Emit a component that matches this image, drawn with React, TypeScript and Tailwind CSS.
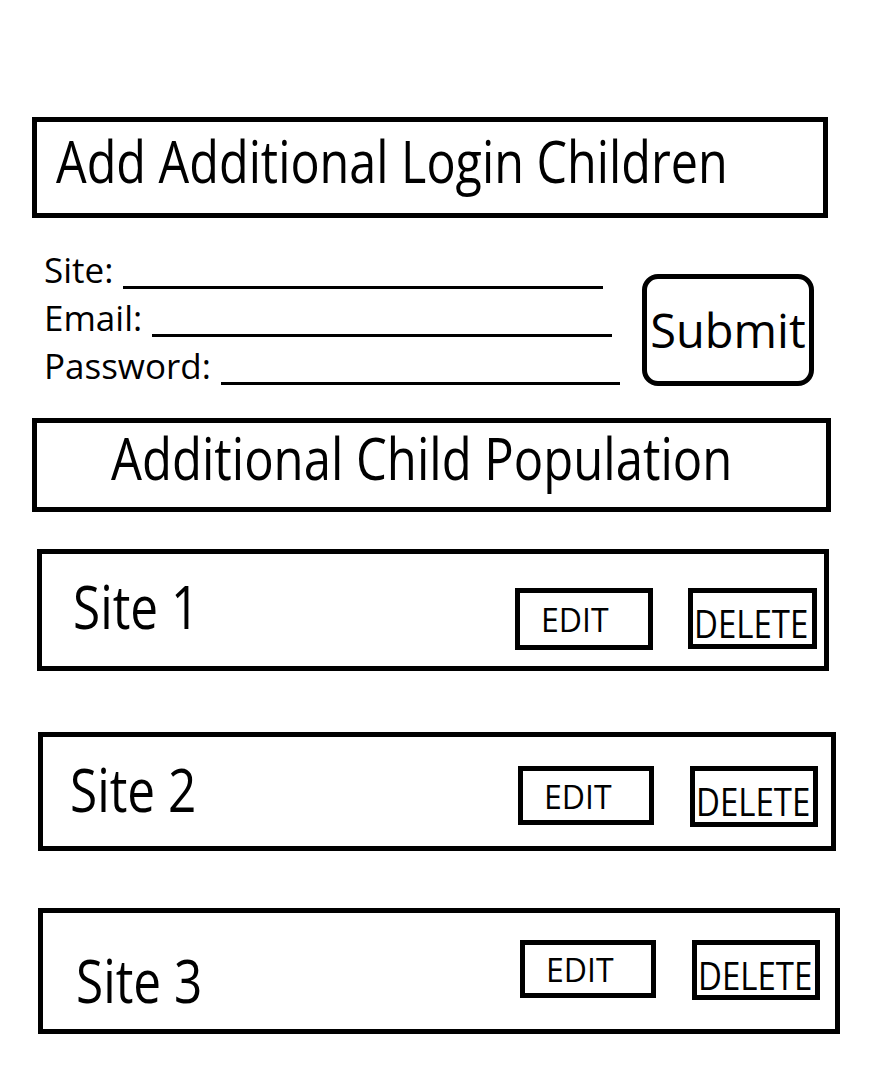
import React from 'react';

const fields = [
  { label: 'Site:', row: 'w-[559px]' },
  { label: 'Email:', row: 'w-[568px]' },
  { label: 'Password:', row: 'w-[576px]' },
];

const sites = [
  {
    name: 'Site 1',
    box: 'ml-[37px] mt-[37px] w-[792px] h-[122px]',
    label: 'ml-[31px] mt-[28px]',
    actions: 'mr-[7px] mt-[34px] gap-[35px]',
    edit: 'w-[138px] h-[62px]',
    del: 'w-[129px] h-[61px]',
  },
  {
    name: 'Site 2',
    box: 'ml-[38px] mt-[61px] w-[798px] h-[119px]',
    label: 'ml-[27px] mt-[28px]',
    actions: 'mr-[13px] mt-[29px] gap-[36px]',
    edit: 'w-[136px] h-[59px]',
    del: 'w-[128px] h-[61px]',
  },
  {
    name: 'Site 3',
    box: 'ml-[38px] mt-[57px] w-[802px] h-[126px]',
    label: 'ml-[33px] mt-[43px]',
    actions: 'mr-[15px] mt-[27px] gap-[36px]',
    edit: 'w-[136px] h-[58px]',
    del: 'w-[128px] h-[60px]',
  },
];

const SiteRow: React.FC<{ site: (typeof sites)[number] }> = ({ site }) => (
  <div className={`flex items-start border-[5px] border-black ${site.box}`}>
    <span className={`block whitespace-nowrap text-[49.5px] leading-none scale-y-[1.2] ${site.label}`}>
      {site.name}
    </span>
    <div className={`ml-auto flex items-start ${site.actions}`}>
      <button className={`flex items-center justify-start border-[5px] border-black pl-[21px] ${site.edit}`}>
        <span className="block text-[32px] leading-none scale-y-[1.05]">EDIT</span>
      </button>
      <button className={`flex items-center justify-start border-[5px] border-black pl-[1px] pt-[10px] ${site.del}`}>
        <span className="block text-[33px] leading-none scale-y-[1.18]">DELETE</span>
      </button>
    </div>
  </div>
);

export default function App() {
  return (
    <div className="min-h-screen bg-white pt-[117px] pb-[38px] font-['Open_Sans',sans-serif] text-black">
      <div className="ml-[32px] h-[101px] w-[796px] border-[5px] border-black pl-[19px] pt-[14px]">
        <h1 className="block whitespace-nowrap text-[48.5px] leading-none scale-y-[1.2]">
          Add Additional Login Children
        </h1>
      </div>

      <div className="ml-[44px] mt-[25px] flex items-start">
        <div className="flex w-[576px] flex-col">
          {fields.map((f) => (
            <div key={f.label} className={`flex h-[48px] items-start ${f.row}`}>
              <span className="mt-[9px] inline-block whitespace-nowrap text-[35px] leading-none">
                {f.label}
              </span>
              <span className="ml-[10px] mt-[43px] h-[3px] flex-1 bg-black" />
            </div>
          ))}
        </div>
        <button className="ml-[22px] mt-[31px] flex h-[112px] w-[172px] items-center justify-center rounded-[16px] border-[5px] border-black text-[47px] leading-none">
          Submit
        </button>
      </div>

      <div className="ml-[32px] mt-[31px] h-[94px] w-[799px] border-[5px] border-black pl-[74px] pt-[10px]">
        <h2 className="block whitespace-nowrap text-[49px] leading-none scale-y-[1.2]">
          Additional Child Population
        </h2>
      </div>

      {sites.map((s) => (
        <SiteRow key={s.name} site={s} />
      ))}
    </div>
  );
}
